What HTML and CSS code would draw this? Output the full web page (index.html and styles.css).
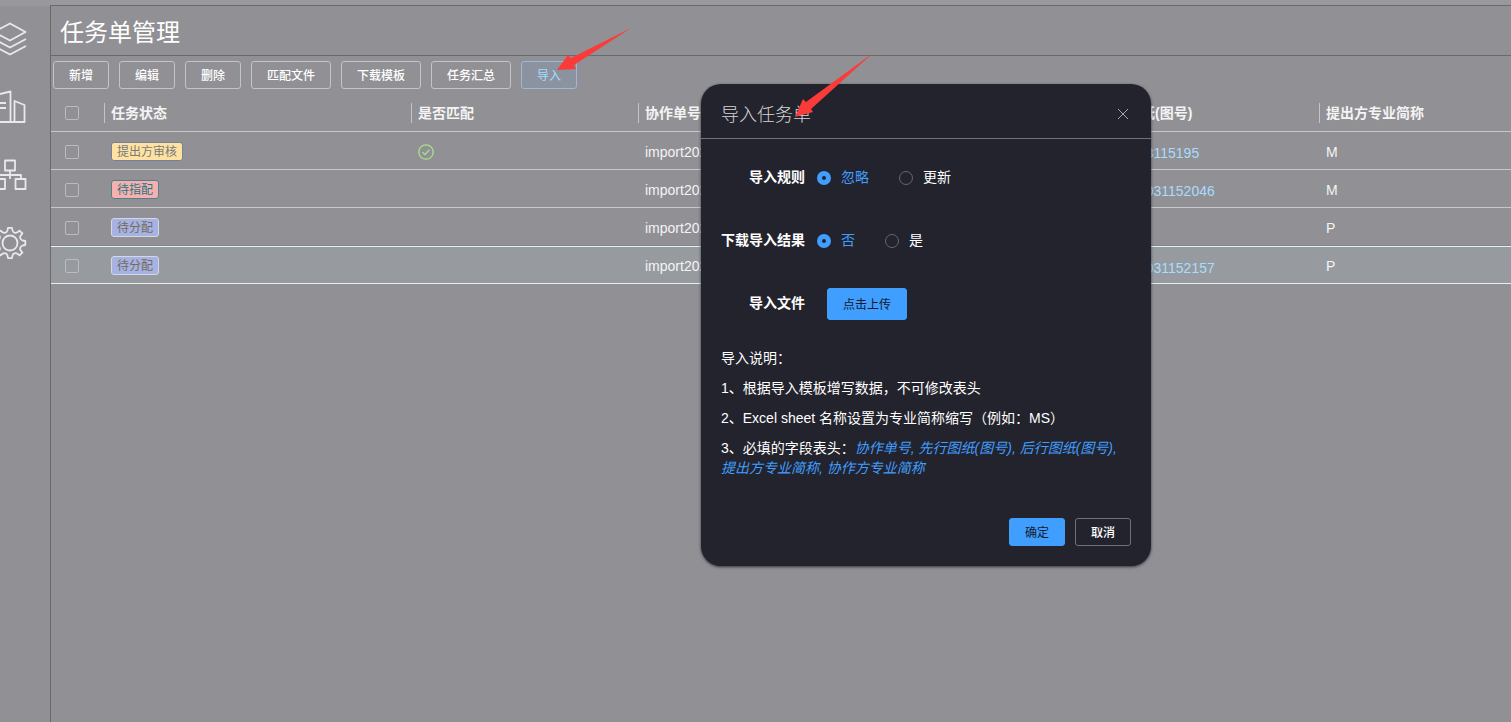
FILE: index.html
```html
<!DOCTYPE html>
<html lang="zh-CN">
<head>
<meta charset="utf-8">
<title>任务单管理</title>
<link rel="stylesheet" href="styles.css">
</head>
<body>
<div class="app">
  <nav class="sidebar" aria-label="主导航">
    <a href="#" aria-label="图层"><svg width="27" height="36" viewBox="0 0 27 36"><path d="M10 2.500 -6 11 10 19.500 25.500 11ZM-6 18 10 26.500 26 18M-6 25 10 33.500 26 25"/></svg></a>
    <a href="#" aria-label="项目"><svg width="27" height="36" viewBox="0 0 27 36"><path d="M-6 33H24.500V16L14.500 12V33M0 5 10.500 2.500V33M0 14H6M0 19H6"/></svg></a>
    <a href="#" aria-label="组织"><svg width="27" height="36" viewBox="0 0 27 36"><path d="M5 3.500H15V13.500H5ZM10 13.500V22M-1 22V18H21V22M-5 22H5V32H-5ZM15.500 22H25.500V32H15.500Z"/></svg></a>
    <a href="#" aria-label="设置"><svg width="27" height="36" viewBox="0 0 27 36"><circle cx="10" cy="18" r="7.500"/><path d="M8 2.800H12L12.500 5.400A3.200 3.200 0 0 0 17.400 7.300L19.500 5.600 22.400 8.500 20.700 10.600A3.200 3.200 0 0 0 22.600 15.500L25.300 16V20L22.600 20.500A3.200 3.200 0 0 0 20.700 25.400L22.400 27.500 19.500 30.400 17.400 28.700A3.200 3.200 0 0 0 12.500 30.600L12 33.200H8L7.500 30.600A3.200 3.200 0 0 0 2.600 28.700L.5 30.400-2.400 27.500-.7 25.400A3.200 3.200 0 0 0-2.600 20.500V15.500A3.200 3.200 0 0 0-.7 10.600L-2.400 8.500.5 5.600 2.600 7.300A3.200 3.200 0 0 0 7.500 5.400Z"/></svg></a>
  </nav>
  <main class="main">
    <header class="page-head"><h1>任务单管理</h1></header>
    <div class="toolbar">
      <button class="btn">新增</button>
      <button class="btn">编辑</button>
      <button class="btn">删除</button>
      <button class="btn">匹配文件</button>
      <button class="btn">下载模板</button>
      <button class="btn">任务汇总</button>
      <button class="btn btn-active">导入</button>
    </div>
    <table class="tasks">
      <colgroup><col class="c-check"><col class="c-status"><col class="c-mid"><col class="c-mid"><col class="c-mid"><col class="c-mid"><col></colgroup>
      <thead>
        <tr>
          <th><input type="checkbox" class="check" aria-label="全选"></th>
          <th><span>任务状态</span></th><th><span>是否匹配</span></th><th><span>协作单号</span></th><th><span>先行图纸(图号)</span></th><th><span>后行图纸(图号)</span></th><th><span>提出方专业简称</span></th>
        </tr>
      </thead>
      <tbody>
        <tr>
          <td><input type="checkbox" class="check" aria-label="选择第1行"></td>
          <td><span class="tag tag-review">提出方审核</span></td>
          <td><svg class="ok" width="16" height="16" viewBox="0 0 16 16" role="img" aria-label="已匹配"><circle cx="8" cy="8" r="7.200"/><path d="M4.500 8.300 7 10.500 11.600 5.600"/></svg></td>
          <td>import20221031</td><td></td><td class="link-cell"><a href="#">2022103115195</a></td><td>M</td>
        </tr>
        <tr>
          <td><input type="checkbox" class="check" aria-label="选择第2行"></td>
          <td><span class="tag tag-assign">待指配</span></td><td></td>
          <td>import20221031</td><td></td><td class="link-cell"><a href="#">202210031152046</a></td><td>M</td>
        </tr>
        <tr>
          <td><input type="checkbox" class="check" aria-label="选择第3行"></td>
          <td><span class="tag tag-wait">待分配</span></td><td></td>
          <td>import20221031</td><td></td><td></td><td>P</td>
        </tr>
        <tr class="selected">
          <td><input type="checkbox" class="check" aria-label="选择第4行"></td>
          <td><span class="tag tag-wait">待分配</span></td><td></td>
          <td>import20221031</td><td></td><td class="link-cell"><a href="#">202210031152157</a></td><td>P</td>
        </tr>
      </tbody>
    </table>
  </main>
</div>

<section class="dialog" role="dialog" aria-labelledby="dialog-title">
  <header class="dialog-head">
    <h2 id="dialog-title">导入任务单</h2>
    <button class="close" aria-label="关闭"><svg width="12" height="12" viewBox="0 0 12 12"><path d="M1 1 11 11M11 1 1 11"/></svg></button>
  </header>
  <form class="dialog-body">
    <div class="field" role="radiogroup" aria-labelledby="rule">
      <span class="field-label" id="rule">导入规则</span>
      <label class="radio"><input type="radio" name="rule" checked><span>忽略</span></label>
      <label class="radio"><input type="radio" name="rule"><span>更新</span></label>
    </div>
    <div class="field" role="radiogroup" aria-labelledby="result">
      <span class="field-label" id="result">下载导入结果</span>
      <label class="radio"><input type="radio" name="result" checked><span>否</span></label>
      <label class="radio"><input type="radio" name="result"><span>是</span></label>
    </div>
    <div class="field">
      <label class="field-label" for="upload">导入文件</label>
      <button type="button" class="btn btn-primary btn-upload" id="upload">点击上传</button>
    </div>
    <div class="notes">
      <p>导入说明：</p>
      <p>1、根据导入模板增写数据，不可修改表头</p>
      <p>2、Excel sheet 名称设置为专业简称缩写（例如：MS）</p>
      <p>3、必填的字段表头：<em>协作单号, 先行图纸(图号), 后行图纸(图号), 提出方专业简称, 协作方专业简称</em></p>
    </div>
    <footer class="dialog-foot">
      <button type="button" class="btn btn-primary">确定</button>
      <button type="button" class="btn btn-cancel">取消</button>
    </footer>
  </form>
</section>

<svg class="arrow arrow-import" width="76" height="44" viewBox="0 0 76 44" aria-hidden="true"><path d="M1 42 12 27 15 30 75 0 18 37 20 41Z"/></svg>
<svg class="arrow arrow-title" width="80" height="66" viewBox="0 0 80 66" aria-hidden="true"><path d="M1 64 9 46 12 49 79 0 17 56 19 59Z"/></svg>
</body>
</html>
```
FILE: styles.css
```css
* { box-sizing: border-box; }
body {
  margin: 0;
  background: #919095;
  color: #f4f4f4;
  font: 14px/20px "Liberation Sans", "Noto Sans CJK SC", sans-serif;
  overflow: hidden;
}
h1, h2, p { margin: 0; }
button { font: inherit; cursor: pointer; }

.app { display: flex; min-height: 100vh; padding-top: 5px; background: #99989d; }
.sidebar {
  flex: 0 0 50px;
  display: flex;
  flex-direction: column;
  gap: 32px;
  padding-top: 15px;
  background: #919095;
  border-top: 1px solid #99989d;
}
.sidebar a { display: flex; height: 36px; }
.sidebar svg { fill: none; stroke: #e9e9ec; stroke-width: 1.8; stroke-linejoin: round; }

.main {
  flex: 1;
  min-width: 0;
  background: #919095;
  border-top: 1px solid #6b6a6a;
  border-left: 1px solid #6b6a6a;
}
.page-head {
  height: 50px;
  display: flex;
  align-items: center;
  padding: 4px 9px 0;
  border-bottom: 1px solid #6b6a6a;
}
.page-head h1 { font-size: 24px; line-height: 32px; font-weight: 400; color: #fff; }

.toolbar { display: flex; gap: 10px; padding: 5px 2px; }
.btn {
  height: 28px;
  padding: 2px 15px 0;
  border: 1px solid #c4c4c6;
  border-radius: 3px;
  background: transparent;
  color: #fff;
  font-size: 12px;
  line-height: 18px;
  white-space: nowrap;
}
.toolbar .btn, .btn-cancel { font-weight: 500; }
.toolbar .btn-active { color: #a8dcff; background: #8b93a1; border-color: #9db8d8; font-weight: 400; }

.tasks { width: 100%; table-layout: fixed; border-collapse: separate; border-spacing: 0; }
.c-check { width: 53px; }
.c-status { width: 307px; }
.c-mid { width: 227px; }
.tasks th, .tasks td {
  height: 38px;
  padding: 2px 0 0 7px;
  border-bottom: 1px solid #c8c8ca;
  text-align: left;
  white-space: nowrap;
  overflow: hidden;
}
.tasks th { padding: 0; }
.tasks th span { display: block; padding-left: 6px; border-left: 1px solid #c4c4c6; font-weight: 700; }
.tasks th:first-child, .tasks td:first-child { padding-left: 14px; }
.tasks tr:has(+ .selected) td { border-bottom-color: #85848a; }
.tasks .selected td { background: #979b9f; border-top: 1px solid #e2f1f3; border-bottom-color: #e8eeee; padding-top: 1px; }
.tasks .link-cell, .tasks .selected .link-cell { padding-top: 5px; }
.tasks a { color: #a8dcff; text-decoration: none; }
.check {
  appearance: none;
  display: block;
  width: 14px;
  height: 14px;
  margin: 1px 0 0;
  border: 1px solid #bcbcbe;
  border-radius: 2px;
}
.tag {
  display: block;
  width: fit-content;
  height: 19px;
  padding: 1px 5px 0;
  border: 1px solid;
  border-radius: 3px;
  font-size: 12px;
  line-height: 17px;
}
.tag-review { background: #ffe2a2; border-color: #75809a; color: #75797c; }
.tag-assign { background: #f7b0b0; border-color: #50818a; color: #1e7784; }
.tag-wait { background: #a6b2e3; border-color: #d4d8e2; color: #746c59; }
.ok { display: block; fill: none; stroke: #a9e08d; stroke-width: 1.3; }

.dialog {
  position: absolute;
  top: 84px;
  right: 360px;
  width: 450px;
  border-radius: 20px;
  background: #23232d;
  box-shadow: 0 1px 3px #33333d;
  color: #fff;
}
.dialog-head {
  display: flex;
  justify-content: space-between;
  align-items: center;
  height: 55px;
  padding: 6px 22px 0 20px;
  border-bottom: 1px solid #707174;
}
.dialog-head h2 { padding-top: 2px; font-size: 18px; line-height: 24px; font-weight: 300; color: #d5d5d5; }
.close { display: flex; padding: 0; border: 0; background: none; }
.close svg { fill: none; stroke: #a7a7ad; }
.dialog-body { padding: 18px 20px 20px; }
.field { display: flex; align-items: center; height: 40px; margin-bottom: 23px; }
.field-label { width: 84px; margin-right: 12px; text-align: right; font-weight: 700; }
.radio { display: flex; align-items: center; gap: 10px; margin-right: 30px; }
.radio input {
  appearance: none;
  width: 14px;
  height: 14px;
  margin: 1px 0 0;
  border: 1px solid #66666c;
  border-radius: 50%;
}
.radio input:checked { border: 5px solid #409eff; background: #23232d; }
.radio input:checked + span { color: #409eff; }
.btn-primary { background: #409eff; border-color: #409eff; color: #141b2c; }
.btn-upload { height: 32px; margin: 2px 0 0 10px; }
.notes { display: flex; flex-direction: column; gap: 10px; padding-top: 2px; }
.notes em { color: #409eff; }
.dialog-foot { display: flex; justify-content: flex-end; gap: 10px; margin-top: 40px; }
.btn-cancel { border-color: #707174; }

.arrow { position: absolute; fill: #fb3b3a; }
.arrow-import { left: 556px; top: 28px; }
.arrow-title { left: 794px; top: 53px; }
```
